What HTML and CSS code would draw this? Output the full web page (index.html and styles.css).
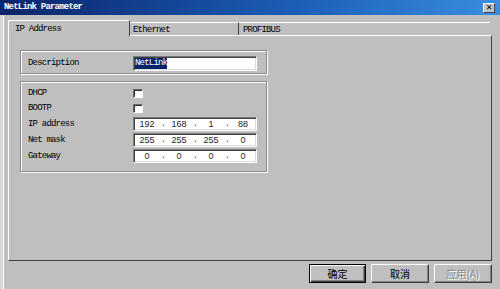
FILE: index.html
```html
<!DOCTYPE html>
<html>
<head>
    <title>NetLink Parameter</title>
    <meta charset="utf-8" />
    <link rel="stylesheet" href="styles.css">
</head>
<body>
<div class="pencere">
    <div class="baslik">
        <span class="baslikYazi">NetLink Parameter</span>
        <span class="kapat">&#x2715;</span>
    </div>

    <div class="sekmeler">
        <div class="sekme aktif">IP Address</div>
        <div class="sekme eth">Ethernet</div>
        <div class="sekme pro">PROFIBUS</div>
    </div>

    <div class="panel">
        <div class="grup grup1">
            <div class="satir">
                <span class="etiket">Description</span>
                <span class="kutu metin"><span class="secili">NetLink</span></span>
            </div>
        </div>

        <div class="grup grup2">
            <div class="satir kisa">
                <span class="etiket">DHCP</span>
                <span class="onay"></span>
            </div>
            <div class="satir kisa">
                <span class="etiket">BOOTP</span>
                <span class="onay"></span>
            </div>
            <div class="satir">
                <span class="etiket">IP address</span>
                <span class="kutu ip"><i>192</i><b>.</b><i>168</i><b>.</b><i>1</i><b>.</b><i>88</i></span>
            </div>
            <div class="satir">
                <span class="etiket">Net mask</span>
                <span class="kutu ip"><i>255</i><b>.</b><i>255</i><b>.</b><i>255</i><b>.</b><i>0</i></span>
            </div>
            <div class="satir">
                <span class="etiket">Gateway</span>
                <span class="kutu ip"><i>0</i><b>.</b><i>0</i><b>.</b><i>0</i><b>.</b><i>0</i></span>
            </div>
        </div>
    </div>

    <div class="altlar">
        <span class="dugme varsayili">确定</span>
        <span class="dugme">取消</span>
        <span class="dugme pasif">应用(A)</span>
    </div>
</div>
</body>
</html>
```

FILE: styles.css
```css
body {margin: 0; background: #bfbfbf;}

.pencere {
    width: 500px;
    height: 289px;
    overflow: hidden;
    background: #bfbfbf;
    box-shadow: inset 3px 0 0 #d6d6d6, inset 4px 0 0 #fff;
    font: 9px/1 "Liberation Mono", monospace;
    letter-spacing: -0.8px;
    color: #000;}

.baslik {
    height: 15px;
    display: flex;
    align-items: center;
    justify-content: space-between;
    padding: 0 5px 0 4px;
    background: linear-gradient(to right, #0a246a, #1c5fb8 60%, #3a8ee0);}
.baslikYazi {color: #fff; font-weight: bold;}
.kapat {
    width: 12px;
    height: 10px;
    box-sizing: border-box;
    background: #c4c4c4;
    border: 1px solid;
    border-color: #fff #404040 #404040 #fff;
    font: bold 8px/8px "DejaVu Sans", sans-serif;
    letter-spacing: 0;
    text-align: center;}

.sekmeler {
    display: flex;
    align-items: flex-end;
    margin: 5px 0 0 8px;
    height: 15px;
    position: relative;
    z-index: 1;}
.sekme {
    height: 13px;
    box-sizing: border-box;
    border-top: 1px solid #fff;
    border-right: 1px solid #404040;
    padding: 3px 0 0 4px;}
.sekme.aktif {
    width: 122px;
    height: 16px;
    margin-bottom: -1px;
    padding: 4px 0 0 6px;
    background: #bfbfbf;
    border-left: 1px solid #fff;
    border-right: 1px solid #404040;}
.sekme.eth {width: 109px; padding-left: 3px;}
.sekme.pro {width: 251px; border-right: none;}

.panel {
    width: 484px;
    height: 226px;
    margin-left: 8px;
    box-sizing: border-box;
    border: 1px solid;
    border-color: #fff #404040 #404040 #fff;
    padding: 14px 0 0 11px;}

.grup {
    width: 247px;
    box-sizing: border-box;
    border: 1px solid #8a8a8a;
    box-shadow: inset 1px 1px 0 #fff, 1px 1px 0 #fff;
    padding: 0 0 0 7px;}
.grup1 {height: 24px; padding-top: 4px;}
.grup2 {height: 91px; margin-top: 7px; padding-top: 4px;}

.satir {display: flex; align-items: center; height: 16px;}
.satir.kisa {height: 15px;}
.etiket {width: 105px; flex: none;}

.kutu {
    width: 124px;
    height: 14px;
    box-sizing: border-box;
    background: #fff;
    border: 1px solid;
    border-color: #7a7a7a #fff #fff #7a7a7a;
    box-shadow: inset 1px 1px 0 #404040, inset -1px -1px 0 #dcdcdc;
    display: flex;
    align-items: center;}
.grup1 .kutu {height: 15px;}
.metin {padding-left: 1px;}
.secili {background: #0a246a; color: #fff; padding: 1px 0;}
.ip i {font-style: normal; flex: 1; text-align: center; font-family: "Liberation Sans", sans-serif; letter-spacing: 0; color: #222;}
.ip b {font-weight: normal; color: #555; width: 6px; text-align: center;}

.onay {
    width: 10px;
    height: 9px;
    box-sizing: border-box;
    background: #fff;
    border: 1px solid;
    border-color: #6a6a6a #fff #fff #6a6a6a;
    box-shadow: inset 1px 1px 0 #303030;}

.altlar {
    display: flex;
    justify-content: flex-end;
    gap: 5px;
    margin-top: 3px;
    padding-right: 8px;}
.dugme {
    width: 58px;
    height: 19px;
    box-sizing: border-box;
    border: 1px solid;
    border-color: #fff #404040 #404040 #fff;
    box-shadow: inset -1px -1px 0 #808080;
    font: 10px/17px "Noto Sans CJK SC", sans-serif;
    letter-spacing: 0;
    text-align: center;}
.dugme.varsayili {
    border: 1px solid #000;
    box-shadow: inset 1px 1px 0 #fff, inset -1px -1px 0 #404040, inset -2px -2px 0 #808080;
    width: 57px;}
.dugme.pasif {color: #8a8a8a; text-shadow: 1px 1px 0 #fff;}
```
